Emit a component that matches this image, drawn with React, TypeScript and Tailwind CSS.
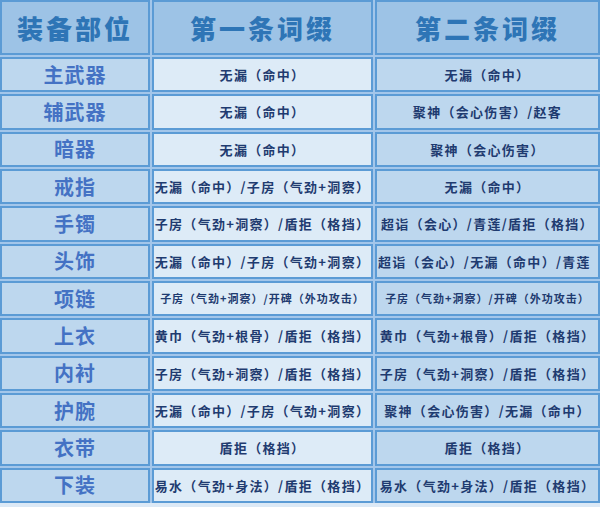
import React from "react";

type Row = { name: string; a: string; b: string; small?: boolean; bLeft?: boolean };

const rows: Row[] = [
  { name: "主武器", a: "无漏（命中）", b: "无漏（命中）" },
  { name: "辅武器", a: "无漏（命中）", b: "聚神（会心伤害）/赵客" },
  { name: "暗器", a: "无漏（命中）", b: "聚神（会心伤害）" },
  { name: "戒指", a: "无漏（命中）/子房（气劲+洞察）", b: "无漏（命中）" },
  { name: "手镯", a: "子房（气劲+洞察）/盾拒（格挡）", b: "超诣（会心）/青莲/盾拒（格挡）" },
  { name: "头饰", a: "无漏（命中）/子房（气劲+洞察）", b: "超诣（会心）/无漏（命中）/青莲", bLeft: true },
  { name: "项链", a: "子房（气劲+洞察）/开碑（外功攻击）", b: "子房（气劲+洞察）/开碑（外功攻击）", small: true },
  { name: "上衣", a: "黄巾（气劲+根骨）/盾拒（格挡）", b: "黄巾（气劲+根骨）/盾拒（格挡）" },
  { name: "内衬", a: "子房（气劲+洞察）/盾拒（格挡）", b: "子房（气劲+洞察）/盾拒（格挡）" },
  { name: "护腕", a: "无漏（命中）/子房（气劲+洞察）", b: "聚神（会心伤害）/无漏（命中）" },
  { name: "衣带", a: "盾拒（格挡）", b: "盾拒（格挡）" },
  { name: "下装", a: "易水（气劲+身法）/盾拒（格挡）", b: "易水（气劲+身法）/盾拒（格挡）" },
];

const font = { fontFamily: '"Noto Sans CJK SC", "Noto Sans", sans-serif' };

export default function App() {
  return (
    <div className="w-[600px] h-[507px] bg-[#dce9f6] overflow-hidden" style={font}>
      <div className="grid grid-cols-[150px_221px_225px] grid-rows-[55px_repeat(12,1fr)] gap-[2px] h-[503px] bg-[#a3c6ea]">
        {["装备部位", "第一条词缀", "第二条词缀"].map((h) => (
          <div
            key={h}
            className="flex items-center justify-center border-2 border-[#5b9bd5] bg-[#9dc3e6] text-[26px] font-black tracking-[3px] text-[#2e75b6] leading-none"
          >
            {h}
          </div>
        ))}
        {rows.map((r) => (
          <React.Fragment key={r.name}>
            <div className="flex items-center justify-center border-2 border-[#5b9bd5] bg-[#bdd7ee] text-[20px] font-bold tracking-[1px] text-[#4472c4] leading-none">
              {r.name}
            </div>
            <div
              className={`flex items-center justify-center overflow-hidden whitespace-nowrap border-2 border-[#5b9bd5] bg-[#ddebf7] font-bold text-[#1f3b70] leading-none ${
                r.small ? "text-[11px] tracking-[1px]" : "text-[13px] tracking-[1.3px]"
              }`}
            >
              {r.a}
            </div>
            <div
              className={`flex items-center overflow-hidden whitespace-nowrap border-2 border-[#5b9bd5] bg-[#bdd7ee] font-bold text-[#1f3b70] leading-none ${
                r.bLeft ? "justify-start pl-[1px]" : "justify-center"
              } ${r.small ? "text-[11px] tracking-[1px]" : "text-[13px] tracking-[1.3px]"}`}
            >
              {r.b}
            </div>
          </React.Fragment>
        ))}
      </div>
    </div>
  );
}
